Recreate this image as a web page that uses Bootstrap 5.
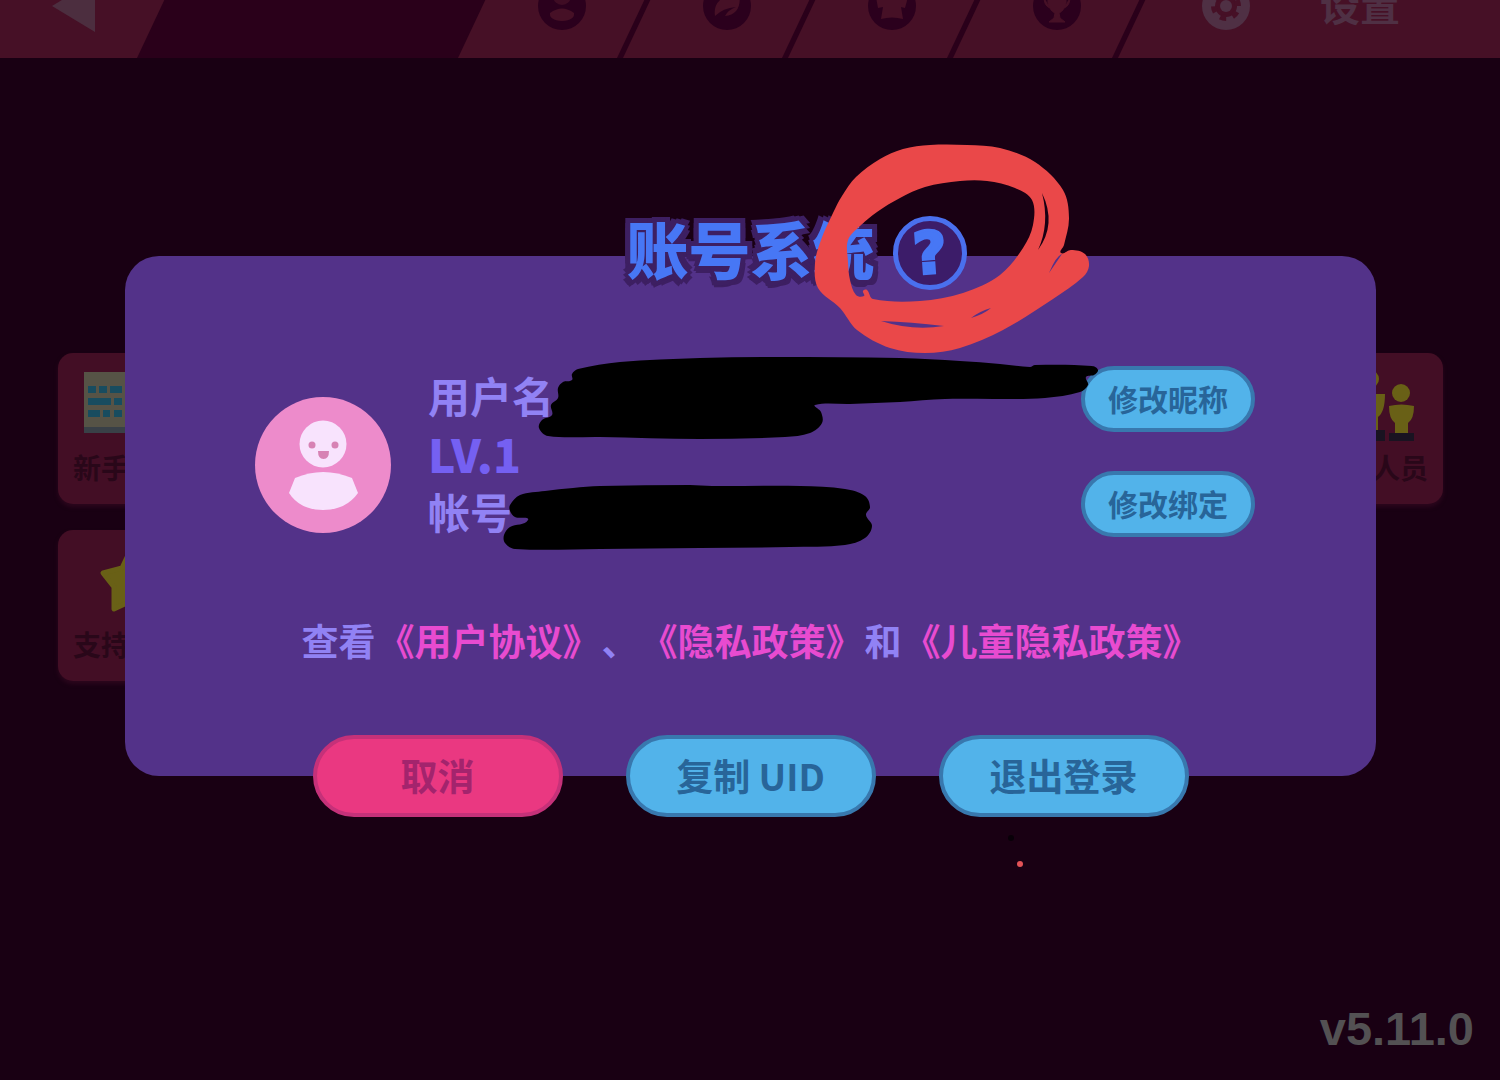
<!DOCTYPE html>
<html lang="zh-CN">
<head>
<meta charset="utf-8">
<meta name="viewport" content="width=device-width, initial-scale=1">
<title>账号系统</title>
<link href="https://cdn.jsdelivr.net/npm/bootstrap@5.3.0/dist/css/bootstrap.min.css" rel="stylesheet">
<style>
  body { background: #190013; font-family: "Noto Sans CJK SC", "Noto Sans", sans-serif; font-weight: 700; }
  .game-bar { height: 58px; background: #2a001a; }
  .bar-inner { height: 104px; }
  .back-tab, .menu-tab { background: #461026; height: 104px; color: #2b001d; }
  .back-tab { width: 186px; padding-left: 52px; clip-path: polygon(0 0, 100% 0, calc(100% - 49px) 100%, 0 100%); }
  .menu-tab { width: 208px; margin-right: -43px; clip-path: polygon(49px 0, 100% 0, calc(100% - 49px) 100%, 0 100%); }
  .settings-tab { width: 382px; margin-right: 0; padding-left: 84px; gap: 70px; color: #4f3044; font-size: 40px; line-height: 56px; clip-path: polygon(49px 0, 100% 0, 100% 100%, 0 100%); }
  .settings-tab span { padding-bottom: 4px; }
  .stage > * { grid-area: 1 / 1; }
  .tile-layer { padding: 295px 57px 0 58px; }
  .tile-stack { gap: 26px; }
  .game-tile { width: 144px; height: 151px; padding: 14px 15px 0; border: 0; border-radius: 15px; background: #430e25; color: #290719; font-size: 28px; font-weight: 700; line-height: 52px; box-shadow: 0 3px 4px #2c061d; }
  .dialog-wrap { padding: 198px 124px 0 125px; }
  .account-panel { background: #533289; border-radius: 34px; }
  .title-row { margin-top: -40px; height: 74px; }
  .panel-title { font-size: 62px; font-weight: 900; line-height: 64px; color: #4777f5;
    text-shadow: -5px -5px #3d1f62, 0 -5px #3d1f62, 5px -5px #3d1f62, -5px 0 #3d1f62, 5px 0 #3d1f62, -5px 5px #3d1f62, 0 5px #3d1f62, 5px 5px #3d1f62, -3px 7px #3d1f62; }
  .help-btn { width: 74px; height: 74px; margin-left: 18px; border: 5px solid #4a70ee; border-radius: 50%; background: #3c1c69; color: #4777f5; font: 700 58px/64px "DejaVu Sans", sans-serif; -webkit-text-stroke: 3px #4777f5; }
  .help-btn span { display: block; transform: rotate(-4deg); }
  .account-row { margin-top: 76px; padding: 0 121px 0 130px; }
  .avatar-pic { margin-top: 31px; }
  .user-lines { margin-left: 37px; font-size: 42px; line-height: 58px; color: #9182f4; }
  .user-lines .level-line { color: #7560f2; font-size: 46px; font-family: "Noto Sans CJK SC", sans-serif; font-weight: 900; }
  .pill-btn { border: 4px solid #3878ae; border-radius: 50px; background: #52b3ea; color: #286599; font-weight: 700; padding: 0; }
  .edit-btn { width: 174px; height: 66px; padding-bottom: 2px; font-size: 30px; line-height: 56px; }
  .edit-stack { gap: 39px; }
  .terms-row { margin-top: 72px; font-size: 37px; line-height: 56px; color: #9182f4; gap: 2px; }
  .terms-row a { color: #e84bd0; text-decoration: none; }
  .action-row { margin: 67px 0 -41px; gap: 63px; }
  .action-btn { width: 250px; height: 82px; padding-bottom: 2px; font-size: 37px; line-height: 72px; }
  .cancel-btn { background: #ea3881; border-color: #c53179; color: #a3246d; }
  .version-foot { padding: 0 26px 16px; font: 700 47px/70px "Liberation Sans", sans-serif; color: #535153; }
  .marks { top: 0; left: 0; pointer-events: none; }
</style>
<script src="https://cdn.jsdelivr.net/npm/bootstrap@5.3.0/dist/js/bootstrap.bundle.min.js"></script>
</head>
<body>
<div class="position-relative min-vh-100 d-flex flex-column overflow-hidden">
  <header class="game-bar d-flex align-items-end overflow-hidden">
    <nav class="bar-inner d-flex flex-grow-1 justify-content-between" aria-label="主菜单">
      <a href="#" class="back-tab d-flex align-items-center" aria-label="返回">
        <svg width="43" height="52" viewBox="0 0 43 52"><path d="M0 26 43 0v52z" fill="#4c2e3f"/></svg>
      </a>
      <div class="d-flex">
        <a href="#" class="menu-tab d-flex align-items-center justify-content-center" aria-label="角色">
          <svg width="48" height="48" viewBox="0 0 48 48"><circle cx="24" cy="24" r="24" fill="currentColor"/><circle cx="24" cy="14" r="9" fill="#3f0c24"/><path d="M12 31Q24 22 36 31 37 38 24 39 11 38 12 31" fill="#461026"/></svg>
        </a>
        <a href="#" class="menu-tab d-flex align-items-center justify-content-center" aria-label="皮肤">
          <svg width="48" height="48" viewBox="0 0 48 48"><circle cx="24" cy="24" r="24" fill="currentColor"/><path d="M12 34Q9 15 36 10 40 32 22 34 25 28 33 25 20 26 12 34" fill="#461026"/></svg>
        </a>
        <a href="#" class="menu-tab d-flex align-items-center justify-content-center" aria-label="服装">
          <svg width="48" height="48" viewBox="0 0 48 48"><circle cx="24" cy="24" r="24" fill="currentColor"/><path d="M8 15 17 10h14l9 5-3 11-4-1 2 12q-11-3-22 0l2-12-5 1z" fill="#461026"/></svg>
        </a>
        <a href="#" class="menu-tab d-flex align-items-center justify-content-center" aria-label="成就">
          <svg width="48" height="48" viewBox="0 0 48 48"><circle cx="24" cy="24" r="24" fill="currentColor"/><path d="M15 9h18v12q-2 8-7 10l1 5 5 4H16l5-4 1-5q-5-2-7-10zM11 15q0 9 6 11M37 15q0 9-6 11" fill="#461026" stroke="#461026"/></svg>
        </a>
        <a href="#" class="menu-tab settings-tab d-flex align-items-center text-decoration-none">
          <svg width="48" height="48" viewBox="0 0 48 48"><circle cx="24" cy="24" r="24" fill="currentColor"/><circle cx="24" cy="24" r="11" fill="#461026"/><circle cx="24" cy="24" r="12" fill="none" stroke="#461026" stroke-width="6" stroke-dasharray="6 6.566" stroke-dashoffset="-6"/><circle cx="24" cy="24" r="6" fill="currentColor"/></svg>
          <span>设置</span>
        </a>
      </div>
    </nav>
  </header>

  <main class="stage d-grid">
    <div class="tile-layer d-flex justify-content-between align-items-start">
      <div class="tile-stack d-flex flex-column">
        <button type="button" class="game-tile d-flex flex-column align-items-start">
          <svg width="112" height="74" viewBox="0 0 112 74"><path fill="#565346" d="M11 5h92v61H11z"/><path fill="#394047" d="M11 60h92v6H11z"/><path fill="#184c5f" d="M15 19h8v7h-8zM26 19h8v7h-8zM37 19h12v7H37zM15 31h23v7H15zM41 31h8v7h-8zM15 43h12v7H15zM30 43h7v7h-7zM41 43h8v7h-8z"/></svg>
          <span>新手</span>
        </button>
        <button type="button" class="game-tile d-flex flex-column align-items-start">
          <svg width="112" height="74" viewBox="0 0 112 74"><path d="M57 7 66 24 85 28 72 43 73 65 56 58 41 65V43L30 29 49 24z" fill="#696016" stroke="#696016" stroke-width="5" stroke-linejoin="round"/></svg>
          <span>支持</span>
        </button>
      </div>
      <button type="button" class="game-tile d-flex flex-column align-items-end">
        <svg width="112" height="74" viewBox="0 0 112 74"><g fill="#696016"><circle cx="54" cy="12" r="9"/><path d="M42 27h27q0 18-7 23v13H50V50q-8-5-8-23M73 39q12-3 25 0 0 13-6 17v10H79V56q-6-4-6-17"/><circle cx="85" cy="26" r="9"/></g><path fill="#191321" d="M41 63h28v11H41zM73 66h25v8H73z"/></svg>
        <span>人员</span>
      </button>
    </div>

    <div class="dialog-wrap">
      <section class="account-panel position-relative d-flex flex-column" role="dialog" aria-labelledby="panelTitle">
        <div class="title-row row g-0 align-items-start">
          <div class="col"></div>
          <h1 id="panelTitle" class="panel-title col-auto m-0">账号系统</h1>
          <div class="col"><button type="button" class="help-btn p-0" aria-label="帮助"><span>?</span></button></div>
        </div>
        <div class="account-row d-flex align-items-start">
          <svg class="avatar-pic flex-shrink-0" width="136" height="136" viewBox="0 0 136 136" role="img" aria-label="头像"><circle cx="68" cy="68" r="68" fill="#ed8bcb"/><circle cx="68" cy="47" r="23.5" fill="#f8e3fd"/><g fill="#d782b4"><circle cx="57" cy="48" r="3.5"/><circle cx="80" cy="48" r="3.5"/><path d="M63 54h11q0 8-5.500 8T63 54"/></g><path d="M40 81Q68 69 97 81L103 96Q91 113 68 113T34 96z" fill="#f8e3fd"/></svg>
          <div class="user-lines flex-grow-1">
            <div>用户名</div>
            <div class="level-line">LV.1</div>
            <div>帐号</div>
          </div>
          <div class="edit-stack d-flex flex-column">
            <button type="button" class="pill-btn edit-btn">修改昵称</button>
            <button type="button" class="pill-btn edit-btn">修改绑定</button>
          </div>
        </div>
        <div class="terms-row d-flex justify-content-center">
          <span>查看</span><a href="#">《用户协议》</a><span>、</span><a href="#">《隐私政策》</a><span>和</span><a href="#">《儿童隐私政策》</a>
        </div>
        <div class="action-row d-flex justify-content-center">
          <button type="button" class="pill-btn action-btn cancel-btn">取消</button>
          <button type="button" class="pill-btn action-btn">复制 UID</button>
          <button type="button" class="pill-btn action-btn">退出登录</button>
        </div>
      </section>
    </div>
  </main>

  <footer class="version-foot mt-auto text-end">v5.11.0</footer>

  <svg class="marks position-absolute w-100 h-100" viewBox="0 0 1500 1080" preserveAspectRatio="xMidYMin meet" aria-hidden="true">
    <path fill="#000" data-loops="572,374 578,369 620,362 700,358 776,357 900,358 960,361 1000,364 1030,367 1035,365 1092,366 1098,370 1094,375 1086,377 1088,385 1080,392 1045,398 1000,399 945,399 900,402 850,404 815,405 821,412 822,423 810,433 785,437 700,439 600,437 548,436 539,428 542,420 552,415 551,405 558,398 558,388 563,382 572,380"/>
    <path fill="#000" data-loops="510,505 520,495 545,491 573,488 600,486 690,485 712,486 800,486 845,489 865,496 870,507 866,515 872,526 865,538 845,545 790,547 700,548 600,549 515,549 505,543 504,535 510,527 528,520 515,517 510,511"/>
    <path fill="#ea4849" data-loops="815,263 821,240 833,213 842,196 856,177 880,159 903,149 930,145 967,145 1000,148 1035,162 1063,190 1069,218 1064,245 1061,253 1071,250 1085,254 1089,266 1083,277 1053,299 1003,330 960,348 925,353 890,348 857,330 840,308 818,288;848,240 848,262 850,280 856,295 864,296 863,291 867,290 873,299 920,301 963,293 1000,275 1023,248 1033,225 1032,200 1015,188 987,181 960,181 925,187 900,198 877,212 860,226"/>
    <path fill="#190013" d="M1042 193Q1057 224 1038 250 1050 224 1042 193"/>
    <path fill="#533289" d="M1049 273 1062 254Q1056 256 1049 273M881 321Q911 322 944 326 912 331 881 321M971 318Q980 311 991 308 984 314 971 318"/>
    <circle cx="1011" cy="838" r="3" fill="#080008"/>
    <circle cx="1020" cy="864" r="3" fill="#e35257"/>
  </svg>
</div>
<script>
  // Turn each list of pen points into a smooth closed loop.
  document.querySelectorAll('[data-loops]').forEach(function (el) {
    el.setAttribute('fill-rule', 'evenodd');
    el.setAttribute('d', el.dataset.loops.split(';').map(function (loop) {
      var p = loop.split(' ').map(function (s) { return s.split(',').map(Number); });
      var n = p.length, d = 'M' + p[0];
      for (var i = 0; i < n; i++) {
        var a = p[(i + n - 1) % n], b = p[i], c = p[(i + 1) % n], e = p[(i + 2) % n];
        var len = Math.hypot(c[0] - b[0], c[1] - b[1]);
        var t1 = len / (Math.hypot(c[0] - a[0], c[1] - a[1]) || 1) / 3;
        var t2 = len / (Math.hypot(e[0] - b[0], e[1] - b[1]) || 1) / 3;
        d += 'C' + [b[0] + (c[0] - a[0]) * t1, b[1] + (c[1] - a[1]) * t1,
                    c[0] - (e[0] - b[0]) * t2, c[1] - (e[1] - b[1]) * t2, c[0], c[1]];
      }
      return d + 'Z';
    }).join(''));
  });
</script>
</body>
</html>
